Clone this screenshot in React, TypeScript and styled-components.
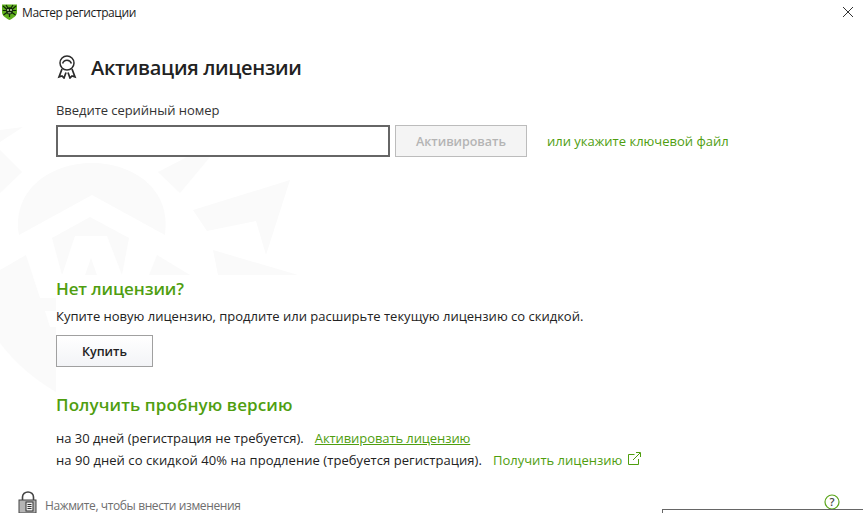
import React from "react";
import styled, { createGlobalStyle } from "styled-components";

const Global = createGlobalStyle`
  html, body { margin: 0; padding: 0; background: #fff; overflow: hidden; }
  body { font-family: "Open Sans", "Noto Sans", sans-serif; color: #222; }
`;

const Page = styled.div`
  position: relative;
  width: 863px;
  height: 513px;
  overflow: hidden;
  background: #fff;
`;

const Watermark = styled.svg`
  position: absolute;
  left: 0;
  top: 0;
  width: 300px;
  height: 400px;
  fill: #fafafa;
`;

const TitleBar = styled.header`
  position: relative;
  height: 24px;
  display: flex;
  align-items: center;
  padding: 0 0 0 2px;
  gap: 5px;
  font-size: 12px;
  letter-spacing: -0.4px;
  color: #1c1c1c;
`;

const CloseButton = styled.svg`
  position: absolute;
  right: 10px;
  top: 7px;
  width: 10px;
  height: 10px;
  stroke: #333;
  stroke-width: 1;
  fill: none;
`;

const Content = styled.main`
  position: relative;
  padding: 28px 0 0 56px;
`;

const Heading = styled.div`
  display: flex;
  align-items: center;
  gap: 14px;
  height: 30px;
`;

const HeadingText = styled.h1`
  margin: 0;
  font-size: 20px;
  font-weight: 600;
  letter-spacing: -0.32px;
  color: #222;
`;

const FieldLabel = styled.div`
  margin-top: 19px;
  font-size: 13px;
  line-height: 18px;
  letter-spacing: -0.05px;
  color: #333;
`;

const SerialRow = styled.div`
  margin-top: 6px;
  display: flex;
  align-items: center;
`;

const SerialInput = styled.input`
  box-sizing: border-box;
  width: 334px;
  height: 32px;
  border: 2px solid #666;
  background: #fff;
  outline: none;
  padding: 0;
  margin: 0;
`;

const ActivateButton = styled.button`
  box-sizing: border-box;
  width: 132px;
  height: 32px;
  margin-left: 5px;
  border: 1px solid #bcbcbc;
  background: #f4f4f4;
  color: #b4b4b4;
  font: 600 12.5px "Open Sans", sans-serif;
  letter-spacing: -0.05px;
  padding: 0;
`;

const GreenLink = styled.a<{ $underline?: boolean }>`
  color: #4f9e0f;
  font-size: 13px;
  letter-spacing: ${(p) => (p.$underline ? "-0.09px" : "0")};
  text-decoration: ${(p) => (p.$underline ? "underline" : "none")};
`;

const KeyFileLink = styled(GreenLink)`
  margin-left: 20px;
`;

const SectionTitle = styled.h2`
  margin: 0;
  font-size: 17px;
  line-height: 24px;
  font-weight: 600;
  color: #4f9e0f;
`;

const NoLicense = styled(SectionTitle)`
  margin-top: 120px;
  letter-spacing: -0.1px;
`;

const TrialTitle = styled(SectionTitle)`
  margin-top: 26px;
  letter-spacing: 0.1px;
`;

const Paragraph = styled.p`
  margin: 6px 0 0;
  font-size: 13px;
  line-height: 18px;
  color: #222;
`;

const BuyButton = styled.button`
  display: block;
  box-sizing: border-box;
  width: 97px;
  height: 32px;
  margin-top: 10px;
  border: 1px solid #a0a0a0;
  background: linear-gradient(#ffffff, #f3f4f7);
  color: #222;
  font: 600 12.5px "Open Sans", sans-serif;
  letter-spacing: -0.05px;
  padding: 0;
`;

const TrialLines = styled.div`
  margin-top: 10px;
  font-size: 13px;
  line-height: 22px;
  color: #222;
`;

const TrialLine = styled.div<{ $spacing?: number }>`
  display: flex;
  align-items: center;
  white-space: pre;
  letter-spacing: ${(p) => p.$spacing ?? 0}px;
`;

const LinkGap = styled.span<{ $w: number }>`
  display: inline-block;
  width: ${(p) => p.$w}px;
`;

const ExternalIcon = styled.svg`
  margin-left: 6px;
  margin-top: -3px;
  width: 13px;
  height: 13px;
  fill: none;
  stroke: #4f9e0f;
  stroke-width: 1;
`;

const LockRow = styled.div`
  position: absolute;
  left: 18px;
  top: 491px;
  display: flex;
  align-items: flex-end;
  gap: 7px;
  font-size: 12px;
  letter-spacing: -0.39px;
  line-height: 22px;
  color: #6e6e6e;
`;

const LockText = styled.span`
  position: relative;
  top: 3px;
`;

const HelpIcon = styled.svg`
  position: absolute;
  left: 824px;
  top: 494px;
  width: 16px;
  height: 16px;
`;

const BottomBox = styled.div`
  position: absolute;
  left: 662px;
  top: 509px;
  width: 201px;
  height: 4px;
  box-sizing: border-box;
  border-top: 1px solid #666;
  border-left: 1px solid #666;
  background: #fff;
`;

const Logo = () => (
  <svg width="15" height="16" viewBox="0 0 15 16">
    <path d="M0 0.5 H15 V8 C15 12 10.5 14.5 7.5 16 C4.5 14.5 0 12 0 8 Z" fill="#5fb01c" />
    <path d="M1 2 L5 5.5 M14 2 L10 5.5 M0.8 6.5 H4.5 M14.2 6.5 H10.5 M1.5 11 L5 8.5 M13.5 11 L10 8.5 M4 1 L6 4 M11 1 L9 4 M7.5 10 V13" stroke="#10240a" strokeWidth="1.2" fill="none" />
    <ellipse cx="7.5" cy="6.8" rx="3.4" ry="3.6" fill="#10240a" />
    <circle cx="6" cy="6" r="0.9" fill="#d5efb0" />
    <circle cx="9" cy="6" r="0.9" fill="#d5efb0" />
    <path d="M5.8 8.8 H9.2" stroke="#d5efb0" strokeWidth="0.8" />
  </svg>
);

const Award = () => (
  <svg width="21" height="24" viewBox="0 0 21 24" fill="none" stroke="#2b2b2b" strokeWidth="1.5">
    <circle cx="11" cy="8" r="7" />
    <path d="M6.6 8.5 A4.6 4.6 0 0 1 15.4 8.5" />
    <path d="M6 14 L3 22 L6 21 L8 23 L10 17.5 M16 14 L19 22 L16 21 L14 23 L12 17.5" strokeWidth="1.7" />
  </svg>
);

const Lock = () => (
  <svg width="20" height="23" viewBox="0 0 20 23">
    <path d="M4.5 9 V6 A5.5 5 0 0 1 15.5 6 V9" fill="none" stroke="#444" strokeWidth="1.6" />
    <rect x="1" y="9" width="17" height="13" fill="#b5b5b5" stroke="#444" />
    <rect x="8" y="11" width="7" height="9" fill="#eee" stroke="#333" />
    <path d="M9.5 13.5 H13.5 M9.5 15.5 H13.5 M9.5 17.5 H13.5" stroke="#333" />
  </svg>
);

export default function App() {
  return (
    <Page>
      <Global />
      <Watermark viewBox="0 0 300 400">
        <polygon points="0,130 23,127 0,142" />
        <polygon points="0,150 22,172 0,193" />
        <path d="M19,235 C12,190 50,163 92,163 C134,163 172,190 165,235 L92,195 Z" />
        <polygon points="52,238 90,217 129,238 122,275 107,236 75,236 62,275" />
        <polygon points="85,275 91,258 97,275" />
        <path d="M0,270 L26,255 L40,298 L56,298 L56,311 L45,311 L50,327 L56,327 L56,392 Q22,372 0,343 Z" />
        <polygon points="158,172 187,157 210,157 180,193" />
        <polygon points="193,210 290,180 266,255 256,221 207,231" />
        <polygon points="213,250 298,275 218,275" />
        <polygon points="149,275 157,255 190,275" />
      </Watermark>
      <TitleBar>
        <Logo />
        <span>Мастер регистрации</span>
        <CloseButton viewBox="0 0 10 10">
          <path d="M0 0 L10 10 M10 0 L0 10" />
        </CloseButton>
      </TitleBar>
      <Content>
        <Heading>
          <Award />
          <HeadingText>Активация лицензии</HeadingText>
        </Heading>
        <FieldLabel>Введите серийный номер</FieldLabel>
        <SerialRow>
          <SerialInput />
          <ActivateButton>Активировать</ActivateButton>
          <KeyFileLink>или укажите ключевой файл</KeyFileLink>
        </SerialRow>
        <NoLicense>Нет лицензии?</NoLicense>
        <Paragraph>Купите новую лицензию, продлите или расширьте текущую лицензию со скидкой.</Paragraph>
        <BuyButton>Купить</BuyButton>
        <TrialTitle>Получить пробную версию</TrialTitle>
        <TrialLines>
          <TrialLine>
            на 30 дней (регистрация не требуется).
            <LinkGap $w={11} />
            <GreenLink $underline>Активировать лицензию</GreenLink>
          </TrialLine>
          <TrialLine $spacing={0.06}>
            на 90 дней со скидкой 40% на продление (требуется регистрация).
            <LinkGap $w={11} />
            <GreenLink>Получить лицензию</GreenLink>
            <ExternalIcon viewBox="0 0 13 13">
              <path d="M6.5 2.5 H0.5 V12.5 H10.5 V7 M5 8 L12 1 M8 0.5 H12.5 V5" />
            </ExternalIcon>
          </TrialLine>
        </TrialLines>
      </Content>
      <LockRow>
        <Lock />
        <LockText>Нажмите, чтобы внести изменения</LockText>
      </LockRow>
      <HelpIcon viewBox="0 0 16 16">
        <circle cx="8" cy="8" r="7" fill="#fff" stroke="#5aa51a" strokeWidth="1.2" />
        <text x="8" y="12" textAnchor="middle" fontSize="11" fontFamily="Open Sans" fontWeight="600" fill="#444">?</text>
      </HelpIcon>
      <BottomBox />
    </Page>
  );
}
